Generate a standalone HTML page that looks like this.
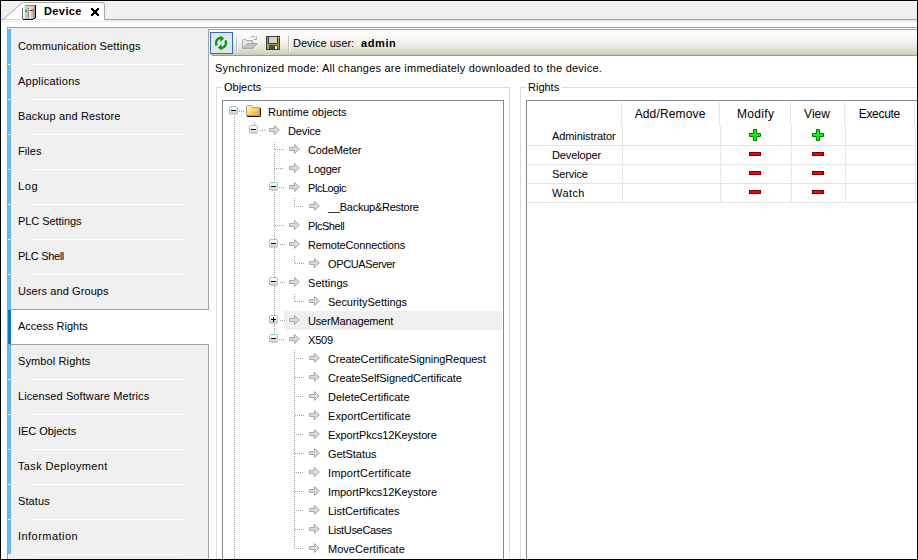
<!DOCTYPE html>
<html><head><meta charset="utf-8"><style>
html,body{margin:0;padding:0;}
body{width:918px;height:560px;overflow:hidden;position:relative;background:#fff;font-family:"Liberation Sans", sans-serif;}
.t{position:absolute;font-family:"Liberation Sans", sans-serif;font-size:11px;line-height:13px;white-space:nowrap;color:#000;}
</style></head><body>
<div style="position:absolute;left:1px;top:1px;width:916px;height:1px;background:#fafafa"></div>
<div style="position:absolute;left:1px;top:2px;width:916px;height:17px;background:#f0f0f0"></div>
<div style="position:absolute;left:1px;top:19px;width:916px;height:1px;background:#a0a0a0"></div>
<div style="position:absolute;left:1px;top:20px;width:916px;height:2px;background:#ececec"></div>
<svg style="position:absolute;left:0;top:0" width="120" height="22">
<path d="M1,19.5 L3,19.5 L21.5,3.5 L23.5,2.5 L102,2.5 Q104.5,2.5 104.5,5 L104.5,20" fill="#ffffff" stroke="#a9a9a9" stroke-width="1"/>
<rect x="1" y="20" width="104" height="1" fill="#ffffff"/>
</svg>
<svg style="position:absolute;left:21px;top:4px" width="16" height="17" shape-rendering="crispEdges">
<polygon points="1,4 4,1 15,1 12,4" fill="#d6d6d6"/>
<rect x="4" y="1" width="10" height="1" fill="#808080"/>
<polygon points="12,4 14,1 14,13 12,15" fill="#a0a0a0"/>
<rect x="1" y="4" width="11" height="11" fill="#c4c4c4"/>
<rect x="2" y="4" width="2" height="11" fill="#f6f6f6"/>
<rect x="8" y="4" width="2" height="11" fill="#e8e8e8"/>
<rect x="7" y="4" width="1" height="11" fill="#8c8c8c"/>
<rect x="1" y="4" width="1" height="11" fill="#6c6c6c"/>
<rect x="4" y="6" width="2" height="2" fill="#00d000"/>
<rect x="9" y="6" width="3" height="1" fill="#b00000"/>
<rect x="14" y="1" width="1" height="13" fill="#000"/>
<rect x="2" y="15" width="10" height="1" fill="#000"/>
<rect x="12" y="14" width="2" height="1" fill="#000"/>
</svg>
<div class="t" style="left:44px;top:5px;font-weight:bold;letter-spacing:0.4px">Device</div>
<svg style="position:absolute;left:91px;top:8px" width="8" height="8" fill="#000"><rect x="0" y="0" width="1" height="1"/><rect x="1" y="0" width="1" height="1"/><rect x="6" y="0" width="1" height="1"/><rect x="7" y="0" width="1" height="1"/><rect x="0" y="1" width="1" height="1"/><rect x="1" y="1" width="1" height="1"/><rect x="2" y="1" width="1" height="1"/><rect x="5" y="1" width="1" height="1"/><rect x="6" y="1" width="1" height="1"/><rect x="7" y="1" width="1" height="1"/><rect x="1" y="2" width="1" height="1"/><rect x="2" y="2" width="1" height="1"/><rect x="3" y="2" width="1" height="1"/><rect x="4" y="2" width="1" height="1"/><rect x="5" y="2" width="1" height="1"/><rect x="6" y="2" width="1" height="1"/><rect x="2" y="3" width="1" height="1"/><rect x="3" y="3" width="1" height="1"/><rect x="4" y="3" width="1" height="1"/><rect x="5" y="3" width="1" height="1"/><rect x="2" y="4" width="1" height="1"/><rect x="3" y="4" width="1" height="1"/><rect x="4" y="4" width="1" height="1"/><rect x="5" y="4" width="1" height="1"/><rect x="1" y="5" width="1" height="1"/><rect x="2" y="5" width="1" height="1"/><rect x="3" y="5" width="1" height="1"/><rect x="4" y="5" width="1" height="1"/><rect x="5" y="5" width="1" height="1"/><rect x="6" y="5" width="1" height="1"/><rect x="0" y="6" width="1" height="1"/><rect x="1" y="6" width="1" height="1"/><rect x="2" y="6" width="1" height="1"/><rect x="5" y="6" width="1" height="1"/><rect x="6" y="6" width="1" height="1"/><rect x="7" y="6" width="1" height="1"/><rect x="0" y="7" width="1" height="1"/><rect x="1" y="7" width="1" height="1"/><rect x="6" y="7" width="1" height="1"/><rect x="7" y="7" width="1" height="1"/></svg>
<div style="position:absolute;left:7px;top:27px;width:910px;height:1px;background:#a0a0a0"></div>
<div style="position:absolute;left:7px;top:27px;width:1px;height:532px;background:#a0a0a0"></div>
<div style="position:absolute;left:8px;top:28px;width:200px;height:531px;background:#f0f0f0"></div>
<div style="position:absolute;left:208px;top:29px;width:1px;height:530px;background:#a0a0a0"></div>
<div style="position:absolute;left:208px;top:29px;width:709px;height:1px;background:#a0a0a0"></div>
<div style="position:absolute;left:8px;top:29px;width:3px;height:35px;background:#66b5ff"></div>
<div style="position:absolute;left:33px;top:64px;width:150px;height:1px;background:#ffffff"></div>
<div class="t" style="left:18px;top:40px;;letter-spacing:0.152px">Communication Settings</div>
<div style="position:absolute;left:8px;top:65px;width:3px;height:34px;background:#66b5ff"></div>
<div style="position:absolute;left:33px;top:99px;width:150px;height:1px;background:#ffffff"></div>
<div class="t" style="left:18px;top:75px;;letter-spacing:0.245px">Applications</div>
<div style="position:absolute;left:8px;top:100px;width:3px;height:34px;background:#66b5ff"></div>
<div style="position:absolute;left:33px;top:134px;width:150px;height:1px;background:#ffffff"></div>
<div class="t" style="left:18px;top:110px;;letter-spacing:0.165px">Backup and Restore</div>
<div style="position:absolute;left:8px;top:135px;width:3px;height:34px;background:#66b5ff"></div>
<div style="position:absolute;left:33px;top:169px;width:150px;height:1px;background:#ffffff"></div>
<div class="t" style="left:18px;top:145px;;letter-spacing:0.075px">Files</div>
<div style="position:absolute;left:8px;top:170px;width:3px;height:34px;background:#66b5ff"></div>
<div style="position:absolute;left:33px;top:204px;width:150px;height:1px;background:#ffffff"></div>
<div class="t" style="left:18px;top:180px;;letter-spacing:0.600px">Log</div>
<div style="position:absolute;left:8px;top:205px;width:3px;height:34px;background:#66b5ff"></div>
<div style="position:absolute;left:33px;top:239px;width:150px;height:1px;background:#ffffff"></div>
<div class="t" style="left:18px;top:215px;;letter-spacing:-0.055px">PLC Settings</div>
<div style="position:absolute;left:8px;top:240px;width:3px;height:34px;background:#66b5ff"></div>
<div style="position:absolute;left:33px;top:274px;width:150px;height:1px;background:#ffffff"></div>
<div class="t" style="left:18px;top:250px;;letter-spacing:-0.325px">PLC Shell</div>
<div style="position:absolute;left:8px;top:275px;width:3px;height:34px;background:#66b5ff"></div>
<div class="t" style="left:18px;top:285px;;letter-spacing:0.087px">Users and Groups</div>
<div style="position:absolute;left:8px;top:309px;width:201px;height:1px;background:#a0a0a0"></div>
<div style="position:absolute;left:8px;top:344px;width:201px;height:1px;background:#a0a0a0"></div>
<div style="position:absolute;left:8px;top:310px;width:201px;height:34px;background:#ffffff"></div>
<div style="position:absolute;left:8px;top:310px;width:3px;height:34px;background:#0078d7"></div>
<div class="t" style="left:18px;top:320px;;letter-spacing:0.008px">Access Rights</div>
<div style="position:absolute;left:8px;top:345px;width:3px;height:34px;background:#66b5ff"></div>
<div style="position:absolute;left:33px;top:379px;width:150px;height:1px;background:#ffffff"></div>
<div class="t" style="left:18px;top:355px;;letter-spacing:0.117px">Symbol Rights</div>
<div style="position:absolute;left:8px;top:380px;width:3px;height:34px;background:#66b5ff"></div>
<div style="position:absolute;left:33px;top:414px;width:150px;height:1px;background:#ffffff"></div>
<div class="t" style="left:18px;top:390px;;letter-spacing:0.092px">Licensed Software Metrics</div>
<div style="position:absolute;left:8px;top:415px;width:3px;height:34px;background:#66b5ff"></div>
<div style="position:absolute;left:33px;top:449px;width:150px;height:1px;background:#ffffff"></div>
<div class="t" style="left:18px;top:425px;;letter-spacing:-0.050px">IEC Objects</div>
<div style="position:absolute;left:8px;top:450px;width:3px;height:34px;background:#66b5ff"></div>
<div style="position:absolute;left:33px;top:484px;width:150px;height:1px;background:#ffffff"></div>
<div class="t" style="left:18px;top:460px;;letter-spacing:0.357px">Task Deployment</div>
<div style="position:absolute;left:8px;top:485px;width:3px;height:34px;background:#66b5ff"></div>
<div style="position:absolute;left:33px;top:519px;width:150px;height:1px;background:#ffffff"></div>
<div class="t" style="left:18px;top:495px;;letter-spacing:0.100px">Status</div>
<div style="position:absolute;left:8px;top:520px;width:3px;height:34px;background:#66b5ff"></div>
<div style="position:absolute;left:33px;top:554px;width:150px;height:1px;background:#ffffff"></div>
<div class="t" style="left:18px;top:530px;;letter-spacing:0.460px">Information</div>
<div style="position:absolute;left:210px;top:30px;width:707px;height:25px;background:linear-gradient(#fefefd 0%,#f4f4ef 45%,#e3e3d9 75%,#cbcbb7 100%)"></div>
<div style="position:absolute;left:212px;top:55px;width:705px;height:1px;background:#9494ac"></div>
<div style="position:absolute;left:210px;top:32px;width:23px;height:22px;background:#e3e6ef;border:1px solid #316ac5;box-sizing:border-box"></div>
<svg style="position:absolute;left:212px;top:34px" width="18" height="18" viewBox="0 0 18 18">
<path d="M4.6,11.6 A5.2,5.2 0 0 1 9,3.9" fill="none" stroke="#00a000" stroke-width="2.4"/>
<path d="M13.4,6.4 A5.2,5.2 0 0 1 9,14.1" fill="none" stroke="#00a000" stroke-width="2.4"/>
<path d="M8.3,1.6 L12.2,4.6 L8.3,7.8 Z" fill="#00a000"/>
<path d="M9.7,10.2 L5.8,13.4 L9.7,16.4 Z" fill="#00a000"/>
</svg>
<div style="position:absolute;left:236px;top:36px;width:1px;height:16px;background:#c5c2b2"></div>
<div style="position:absolute;left:237px;top:36px;width:1px;height:16px;background:#ffffff"></div>
<div style="position:absolute;left:288px;top:36px;width:1px;height:16px;background:#c5c2b2"></div>
<div style="position:absolute;left:289px;top:36px;width:1px;height:16px;background:#ffffff"></div>
<svg style="position:absolute;left:241px;top:35px" width="18" height="16" viewBox="0 0 18 16">
<path d="M1.5,13.5 V5.5 L2.5,4.5 H4.5 L5.5,5.5 H11.5 V8.5" fill="#e6e6e6" stroke="#a8a8a8"/>
<path d="M1.5,13.5 L6.5,8.5 H16.5 L11.5,13.5 Z" fill="#c2c2c2" stroke="#a8a8a8"/>
<path d="M9.5,2.5 Q11.5,0.2 14.2,2.2" fill="none" stroke="#a8a8a8"/>
<path d="M15.5,1.5 V4.5 H12.5" fill="none" stroke="#a8a8a8"/>
</svg>
<svg style="position:absolute;left:265px;top:35px" width="16" height="16" shape-rendering="crispEdges">
<rect x="1" y="1" width="14" height="14" fill="#3c3c3c"/>
<rect x="2" y="2" width="12" height="12" fill="#aaa232"/>
<rect x="3" y="1" width="10" height="8" fill="#3c3c3c"/>
<rect x="4" y="2" width="8" height="6" fill="#d6d6d6"/>
<rect x="4" y="10" width="9" height="4" fill="#4c4c4c"/>
<rect x="10" y="11" width="2" height="3" fill="#eeeeee"/>
<rect x="13" y="2" width="1" height="1" fill="#ffffff"/>
</svg>
<div class="t" style="left:293px;top:37px;;letter-spacing:0.000px">Device user:</div>
<div class="t" style="left:361px;top:37px;font-weight:bold;;letter-spacing:0.600px">admin</div>
<div class="t" style="left:215px;top:62px;;letter-spacing:0.221px">Synchronized mode: All changes are immediately downloaded to the device.</div>
<div style="position:absolute;left:216px;top:87px;width:294px;height:1px;background:#dcdcdc"></div>
<div style="position:absolute;left:216px;top:87px;width:1px;height:472px;background:#dcdcdc"></div>
<div style="position:absolute;left:509px;top:87px;width:1px;height:472px;background:#dcdcdc"></div>
<div style="position:absolute;left:222px;top:84px;width:42px;height:8px;background:#ffffff"></div>
<div class="t" style="left:224px;top:81px;">Objects</div>
<div style="position:absolute;left:520px;top:87px;width:397px;height:1px;background:#dcdcdc"></div>
<div style="position:absolute;left:520px;top:87px;width:1px;height:472px;background:#dcdcdc"></div>
<div style="position:absolute;left:526px;top:84px;width:36px;height:8px;background:#ffffff"></div>
<div class="t" style="left:528px;top:81px;">Rights</div>
<div style="position:absolute;left:222px;top:100px;width:282px;height:459px;border:1px solid #828790;border-bottom:none;box-sizing:border-box;background:#fff"></div>
<div style="position:absolute;left:526px;top:100px;width:400px;height:459px;border:1px solid #828790;border-bottom:none;box-sizing:border-box;background:#fff"></div>
<div style="position:absolute;left:284px;top:311px;width:218px;height:19px;background:#efefef"></div>
<div class="t" style="left:268px;top:106px;;letter-spacing:-0.029px">Runtime objects</div>
<div class="t" style="left:288px;top:125px;;letter-spacing:-0.140px">Device</div>
<div class="t" style="left:308px;top:144px;;letter-spacing:-0.125px">CodeMeter</div>
<div class="t" style="left:308px;top:163px;;letter-spacing:-0.220px">Logger</div>
<div class="t" style="left:308px;top:182px;;letter-spacing:-0.450px">PlcLogic</div>
<div class="t" style="left:328px;top:201px;;letter-spacing:-0.253px">__Backup&amp;Restore</div>
<div class="t" style="left:308px;top:220px;;letter-spacing:-0.450px">PlcShell</div>
<div class="t" style="left:308px;top:239px;;letter-spacing:-0.156px">RemoteConnections</div>
<div class="t" style="left:328px;top:258px;;letter-spacing:-0.380px">OPCUAServer</div>
<div class="t" style="left:308px;top:277px;;letter-spacing:0.043px">Settings</div>
<div class="t" style="left:328px;top:296px;;letter-spacing:-0.027px">SecuritySettings</div>
<div class="t" style="left:308px;top:315px;;letter-spacing:-0.162px">UserManagement</div>
<div class="t" style="left:308px;top:334px;;letter-spacing:-0.167px">X509</div>
<div class="t" style="left:328px;top:353px;;letter-spacing:-0.083px">CreateCertificateSigningRequest</div>
<div class="t" style="left:328px;top:372px;;letter-spacing:-0.073px">CreateSelfSignedCertificate</div>
<div class="t" style="left:328px;top:391px;;letter-spacing:0.012px">DeleteCertificate</div>
<div class="t" style="left:328px;top:410px;;letter-spacing:0.081px">ExportCertificate</div>
<div class="t" style="left:328px;top:429px;;letter-spacing:-0.132px">ExportPkcs12Keystore</div>
<div class="t" style="left:328px;top:448px;;letter-spacing:-0.050px">GetStatus</div>
<div class="t" style="left:328px;top:467px;;letter-spacing:0.144px">ImportCertificate</div>
<div class="t" style="left:328px;top:486px;;letter-spacing:-0.079px">ImportPkcs12Keystore</div>
<div class="t" style="left:328px;top:505px;;letter-spacing:-0.040px">ListCertificates</div>
<div class="t" style="left:328px;top:524px;;letter-spacing:-0.327px">ListUseCases</div>
<div class="t" style="left:328px;top:543px;;letter-spacing:0.029px">MoveCertificate</div>
<svg style="position:absolute;left:0;top:0" width="918" height="560">
<defs><pattern id="dot" width="2" height="2" patternUnits="userSpaceOnUse"><rect x="0" y="0" width="1" height="1" fill="#a0a0a0"/><rect x="1" y="1" width="1" height="1" fill="#a0a0a0"/></pattern>
<linearGradient id="exg" x1="0" y1="0" x2="0" y2="1"><stop offset="0" stop-color="#ffffff"/><stop offset="0.45" stop-color="#f2f2f2"/><stop offset="1" stop-color="#c4c4c4"/></linearGradient>
<linearGradient id="fold" x1="0" y1="0" x2="1" y2="1"><stop offset="0" stop-color="#ffffb8"/><stop offset="0.35" stop-color="#ffe080"/><stop offset="0.6" stop-color="#ffc860"/><stop offset="1" stop-color="#e8a028"/></linearGradient>
</defs>
<rect x="234" y="116" width="1" height="443" fill="url(#dot)"/>
<rect x="254" y="122" width="1" height="9" fill="url(#dot)"/>
<rect x="274" y="141" width="1" height="199" fill="url(#dot)"/>
<rect x="294" y="198" width="1" height="9" fill="url(#dot)"/>
<rect x="294" y="255" width="1" height="9" fill="url(#dot)"/>
<rect x="294" y="293" width="1" height="9" fill="url(#dot)"/>
<rect x="294" y="350" width="1" height="199" fill="url(#dot)"/>
<rect x="239" y="111" width="6" height="1" fill="url(#dot)"/>
<g transform="translate(229,106)" shape-rendering="crispEdges"><rect x="1" y="1" width="7" height="7" fill="url(#exg)"/><rect x="1" y="0" width="7" height="1" fill="#8ccfd4"/><rect x="0" y="1" width="1" height="7" fill="#8ccfd4"/><rect x="8" y="1" width="1" height="3" fill="#8ccfd4"/><rect x="8" y="4" width="1" height="4" fill="#b4d8dc"/><rect x="1" y="8" width="7" height="1" fill="#c8d0d2"/></g>
<rect x="231" y="110" width="5" height="1" fill="#000"/>
<g transform="translate(246,105)"><path d="M0.5,10.5 L0.5,1.5 L1.5,0.5 L5.5,0.5 L6.5,1.5 L6.5,2.5 L13.5,2.5 L13.5,10.5 Z" fill="url(#fold)" stroke="#a89e78"/><rect x="2" y="1" width="4" height="1" fill="#ffe8d0"/><path d="M14.5,3 L14.5,11.5 L1,11.5" fill="none" stroke="#1c1c1c"/></g>
<rect x="259" y="130" width="6" height="1" fill="url(#dot)"/>
<g transform="translate(249,125)" shape-rendering="crispEdges"><rect x="1" y="1" width="7" height="7" fill="url(#exg)"/><rect x="1" y="0" width="7" height="1" fill="#8ccfd4"/><rect x="0" y="1" width="1" height="7" fill="#8ccfd4"/><rect x="8" y="1" width="1" height="3" fill="#8ccfd4"/><rect x="8" y="4" width="1" height="4" fill="#b4d8dc"/><rect x="1" y="8" width="7" height="1" fill="#c8d0d2"/></g>
<rect x="251" y="129" width="5" height="1" fill="#000"/>
<path transform="translate(269,125)" d="M0.5,3.5 L5.5,3.5 L5.5,0.5 L10.3,5 L5.5,9.5 L5.5,6.5 L0.5,6.5 Z" fill="#dadada" stroke="#a8a8a8"/>
<rect x="274" y="149" width="10" height="1" fill="url(#dot)"/>
<path transform="translate(289,144)" d="M0.5,3.5 L5.5,3.5 L5.5,0.5 L10.3,5 L5.5,9.5 L5.5,6.5 L0.5,6.5 Z" fill="#dadada" stroke="#a8a8a8"/>
<rect x="274" y="168" width="10" height="1" fill="url(#dot)"/>
<path transform="translate(289,163)" d="M0.5,3.5 L5.5,3.5 L5.5,0.5 L10.3,5 L5.5,9.5 L5.5,6.5 L0.5,6.5 Z" fill="#dadada" stroke="#a8a8a8"/>
<rect x="279" y="187" width="6" height="1" fill="url(#dot)"/>
<g transform="translate(269,182)" shape-rendering="crispEdges"><rect x="1" y="1" width="7" height="7" fill="url(#exg)"/><rect x="1" y="0" width="7" height="1" fill="#8ccfd4"/><rect x="0" y="1" width="1" height="7" fill="#8ccfd4"/><rect x="8" y="1" width="1" height="3" fill="#8ccfd4"/><rect x="8" y="4" width="1" height="4" fill="#b4d8dc"/><rect x="1" y="8" width="7" height="1" fill="#c8d0d2"/></g>
<rect x="271" y="186" width="5" height="1" fill="#000"/>
<path transform="translate(289,182)" d="M0.5,3.5 L5.5,3.5 L5.5,0.5 L10.3,5 L5.5,9.5 L5.5,6.5 L0.5,6.5 Z" fill="#dadada" stroke="#a8a8a8"/>
<rect x="294" y="206" width="10" height="1" fill="url(#dot)"/>
<path transform="translate(309,201)" d="M0.5,3.5 L5.5,3.5 L5.5,0.5 L10.3,5 L5.5,9.5 L5.5,6.5 L0.5,6.5 Z" fill="#dadada" stroke="#a8a8a8"/>
<rect x="274" y="225" width="10" height="1" fill="url(#dot)"/>
<path transform="translate(289,220)" d="M0.5,3.5 L5.5,3.5 L5.5,0.5 L10.3,5 L5.5,9.5 L5.5,6.5 L0.5,6.5 Z" fill="#dadada" stroke="#a8a8a8"/>
<rect x="279" y="244" width="6" height="1" fill="url(#dot)"/>
<g transform="translate(269,239)" shape-rendering="crispEdges"><rect x="1" y="1" width="7" height="7" fill="url(#exg)"/><rect x="1" y="0" width="7" height="1" fill="#8ccfd4"/><rect x="0" y="1" width="1" height="7" fill="#8ccfd4"/><rect x="8" y="1" width="1" height="3" fill="#8ccfd4"/><rect x="8" y="4" width="1" height="4" fill="#b4d8dc"/><rect x="1" y="8" width="7" height="1" fill="#c8d0d2"/></g>
<rect x="271" y="243" width="5" height="1" fill="#000"/>
<path transform="translate(289,239)" d="M0.5,3.5 L5.5,3.5 L5.5,0.5 L10.3,5 L5.5,9.5 L5.5,6.5 L0.5,6.5 Z" fill="#dadada" stroke="#a8a8a8"/>
<rect x="294" y="263" width="10" height="1" fill="url(#dot)"/>
<path transform="translate(309,258)" d="M0.5,3.5 L5.5,3.5 L5.5,0.5 L10.3,5 L5.5,9.5 L5.5,6.5 L0.5,6.5 Z" fill="#dadada" stroke="#a8a8a8"/>
<rect x="279" y="282" width="6" height="1" fill="url(#dot)"/>
<g transform="translate(269,277)" shape-rendering="crispEdges"><rect x="1" y="1" width="7" height="7" fill="url(#exg)"/><rect x="1" y="0" width="7" height="1" fill="#8ccfd4"/><rect x="0" y="1" width="1" height="7" fill="#8ccfd4"/><rect x="8" y="1" width="1" height="3" fill="#8ccfd4"/><rect x="8" y="4" width="1" height="4" fill="#b4d8dc"/><rect x="1" y="8" width="7" height="1" fill="#c8d0d2"/></g>
<rect x="271" y="281" width="5" height="1" fill="#000"/>
<path transform="translate(289,277)" d="M0.5,3.5 L5.5,3.5 L5.5,0.5 L10.3,5 L5.5,9.5 L5.5,6.5 L0.5,6.5 Z" fill="#dadada" stroke="#a8a8a8"/>
<rect x="294" y="301" width="10" height="1" fill="url(#dot)"/>
<path transform="translate(309,296)" d="M0.5,3.5 L5.5,3.5 L5.5,0.5 L10.3,5 L5.5,9.5 L5.5,6.5 L0.5,6.5 Z" fill="#dadada" stroke="#a8a8a8"/>
<rect x="279" y="320" width="6" height="1" fill="url(#dot)"/>
<g transform="translate(269,315)" shape-rendering="crispEdges"><rect x="1" y="1" width="7" height="7" fill="url(#exg)"/><rect x="1" y="0" width="7" height="1" fill="#8ccfd4"/><rect x="0" y="1" width="1" height="7" fill="#8ccfd4"/><rect x="8" y="1" width="1" height="3" fill="#8ccfd4"/><rect x="8" y="4" width="1" height="4" fill="#b4d8dc"/><rect x="1" y="8" width="7" height="1" fill="#c8d0d2"/></g>
<rect x="271" y="319" width="5" height="1" fill="#000"/>
<rect x="273" y="317" width="1" height="5" fill="#000"/>
<path transform="translate(289,315)" d="M0.5,3.5 L5.5,3.5 L5.5,0.5 L10.3,5 L5.5,9.5 L5.5,6.5 L0.5,6.5 Z" fill="#dadada" stroke="#a8a8a8"/>
<rect x="279" y="339" width="6" height="1" fill="url(#dot)"/>
<g transform="translate(269,334)" shape-rendering="crispEdges"><rect x="1" y="1" width="7" height="7" fill="url(#exg)"/><rect x="1" y="0" width="7" height="1" fill="#8ccfd4"/><rect x="0" y="1" width="1" height="7" fill="#8ccfd4"/><rect x="8" y="1" width="1" height="3" fill="#8ccfd4"/><rect x="8" y="4" width="1" height="4" fill="#b4d8dc"/><rect x="1" y="8" width="7" height="1" fill="#c8d0d2"/></g>
<rect x="271" y="338" width="5" height="1" fill="#000"/>
<path transform="translate(289,334)" d="M0.5,3.5 L5.5,3.5 L5.5,0.5 L10.3,5 L5.5,9.5 L5.5,6.5 L0.5,6.5 Z" fill="#dadada" stroke="#a8a8a8"/>
<rect x="294" y="358" width="10" height="1" fill="url(#dot)"/>
<path transform="translate(309,353)" d="M0.5,3.5 L5.5,3.5 L5.5,0.5 L10.3,5 L5.5,9.5 L5.5,6.5 L0.5,6.5 Z" fill="#dadada" stroke="#a8a8a8"/>
<rect x="294" y="377" width="10" height="1" fill="url(#dot)"/>
<path transform="translate(309,372)" d="M0.5,3.5 L5.5,3.5 L5.5,0.5 L10.3,5 L5.5,9.5 L5.5,6.5 L0.5,6.5 Z" fill="#dadada" stroke="#a8a8a8"/>
<rect x="294" y="396" width="10" height="1" fill="url(#dot)"/>
<path transform="translate(309,391)" d="M0.5,3.5 L5.5,3.5 L5.5,0.5 L10.3,5 L5.5,9.5 L5.5,6.5 L0.5,6.5 Z" fill="#dadada" stroke="#a8a8a8"/>
<rect x="294" y="415" width="10" height="1" fill="url(#dot)"/>
<path transform="translate(309,410)" d="M0.5,3.5 L5.5,3.5 L5.5,0.5 L10.3,5 L5.5,9.5 L5.5,6.5 L0.5,6.5 Z" fill="#dadada" stroke="#a8a8a8"/>
<rect x="294" y="434" width="10" height="1" fill="url(#dot)"/>
<path transform="translate(309,429)" d="M0.5,3.5 L5.5,3.5 L5.5,0.5 L10.3,5 L5.5,9.5 L5.5,6.5 L0.5,6.5 Z" fill="#dadada" stroke="#a8a8a8"/>
<rect x="294" y="453" width="10" height="1" fill="url(#dot)"/>
<path transform="translate(309,448)" d="M0.5,3.5 L5.5,3.5 L5.5,0.5 L10.3,5 L5.5,9.5 L5.5,6.5 L0.5,6.5 Z" fill="#dadada" stroke="#a8a8a8"/>
<rect x="294" y="472" width="10" height="1" fill="url(#dot)"/>
<path transform="translate(309,467)" d="M0.5,3.5 L5.5,3.5 L5.5,0.5 L10.3,5 L5.5,9.5 L5.5,6.5 L0.5,6.5 Z" fill="#dadada" stroke="#a8a8a8"/>
<rect x="294" y="491" width="10" height="1" fill="url(#dot)"/>
<path transform="translate(309,486)" d="M0.5,3.5 L5.5,3.5 L5.5,0.5 L10.3,5 L5.5,9.5 L5.5,6.5 L0.5,6.5 Z" fill="#dadada" stroke="#a8a8a8"/>
<rect x="294" y="510" width="10" height="1" fill="url(#dot)"/>
<path transform="translate(309,505)" d="M0.5,3.5 L5.5,3.5 L5.5,0.5 L10.3,5 L5.5,9.5 L5.5,6.5 L0.5,6.5 Z" fill="#dadada" stroke="#a8a8a8"/>
<rect x="294" y="529" width="10" height="1" fill="url(#dot)"/>
<path transform="translate(309,524)" d="M0.5,3.5 L5.5,3.5 L5.5,0.5 L10.3,5 L5.5,9.5 L5.5,6.5 L0.5,6.5 Z" fill="#dadada" stroke="#a8a8a8"/>
<rect x="294" y="548" width="10" height="1" fill="url(#dot)"/>
<path transform="translate(309,543)" d="M0.5,3.5 L5.5,3.5 L5.5,0.5 L10.3,5 L5.5,9.5 L5.5,6.5 L0.5,6.5 Z" fill="#dadada" stroke="#a8a8a8"/>
</svg>
<div style="position:absolute;left:621px;top:102px;width:1px;height:24px;background:#e5e5e5"></div>
<div style="position:absolute;left:719px;top:102px;width:1px;height:24px;background:#e5e5e5"></div>
<div style="position:absolute;left:790px;top:102px;width:1px;height:24px;background:#e5e5e5"></div>
<div style="position:absolute;left:844px;top:102px;width:1px;height:24px;background:#e5e5e5"></div>
<div style="position:absolute;left:914px;top:102px;width:1px;height:24px;background:#e5e5e5"></div>
<div style="position:absolute;left:622px;top:126px;width:1px;height:77px;background:#e5e5e5"></div>
<div style="position:absolute;left:720px;top:126px;width:1px;height:77px;background:#e5e5e5"></div>
<div style="position:absolute;left:791px;top:126px;width:1px;height:77px;background:#e5e5e5"></div>
<div style="position:absolute;left:845px;top:126px;width:1px;height:77px;background:#e5e5e5"></div>
<div style="position:absolute;left:915px;top:126px;width:1px;height:77px;background:#e5e5e5"></div>
<div style="position:absolute;left:527px;top:145px;width:390px;height:1px;background:#e5e5e5"></div>
<div style="position:absolute;left:527px;top:164px;width:390px;height:1px;background:#e5e5e5"></div>
<div style="position:absolute;left:527px;top:183px;width:390px;height:1px;background:#e5e5e5"></div>
<div style="position:absolute;left:527px;top:202px;width:390px;height:1px;background:#e5e5e5"></div>
<div class="t" style="left:610px;width:120px;text-align:center;top:107px;font-size:12px;line-height:14px;letter-spacing:0.15px;text-indent:0.15px">Add/Remove</div>
<div class="t" style="left:695.5px;width:120px;text-align:center;top:107px;font-size:12px;line-height:14px;letter-spacing:0.3px;text-indent:0.3px">Modify</div>
<div class="t" style="left:757px;width:120px;text-align:center;top:107px;font-size:12px;line-height:14px;letter-spacing:0px;text-indent:0px">View</div>
<div class="t" style="left:819.5px;width:120px;text-align:center;top:107px;font-size:12px;line-height:14px;letter-spacing:-0.3px;text-indent:-0.3px">Execute</div>
<div class="t" style="left:552px;top:130px;;letter-spacing:-0.092px">Administrator</div>
<div class="t" style="left:552px;top:149px;;letter-spacing:-0.113px">Developer</div>
<div class="t" style="left:552px;top:168px;;letter-spacing:-0.117px">Service</div>
<div class="t" style="left:552px;top:187px;;letter-spacing:0.425px">Watch</div>
<svg style="position:absolute;left:749px;top:129px" width="12" height="12"><path d="M4.5,0.5 H7.5 V4.5 H11.5 V7.5 H7.5 V11.5 H4.5 V7.5 H0.5 V4.5 H4.5 Z" fill="#00ff00" stroke="#007800"/></svg>
<svg style="position:absolute;left:812px;top:129px" width="12" height="12"><path d="M4.5,0.5 H7.5 V4.5 H11.5 V7.5 H7.5 V11.5 H4.5 V7.5 H0.5 V4.5 H4.5 Z" fill="#00ff00" stroke="#007800"/></svg>
<svg style="position:absolute;left:749px;top:152px" width="12" height="4"><rect x="0.5" y="0.5" width="11" height="3" fill="#ff0000" stroke="#800000"/></svg>
<svg style="position:absolute;left:812px;top:152px" width="12" height="4"><rect x="0.5" y="0.5" width="11" height="3" fill="#ff0000" stroke="#800000"/></svg>
<svg style="position:absolute;left:749px;top:171px" width="12" height="4"><rect x="0.5" y="0.5" width="11" height="3" fill="#ff0000" stroke="#800000"/></svg>
<svg style="position:absolute;left:812px;top:171px" width="12" height="4"><rect x="0.5" y="0.5" width="11" height="3" fill="#ff0000" stroke="#800000"/></svg>
<svg style="position:absolute;left:749px;top:190px" width="12" height="4"><rect x="0.5" y="0.5" width="11" height="3" fill="#ff0000" stroke="#800000"/></svg>
<svg style="position:absolute;left:812px;top:190px" width="12" height="4"><rect x="0.5" y="0.5" width="11" height="3" fill="#ff0000" stroke="#800000"/></svg>
<div style="position:absolute;left:0px;top:0px;width:918px;height:560px;border:1px solid #000;box-sizing:border-box;pointer-events:none"></div>
</body></html>
